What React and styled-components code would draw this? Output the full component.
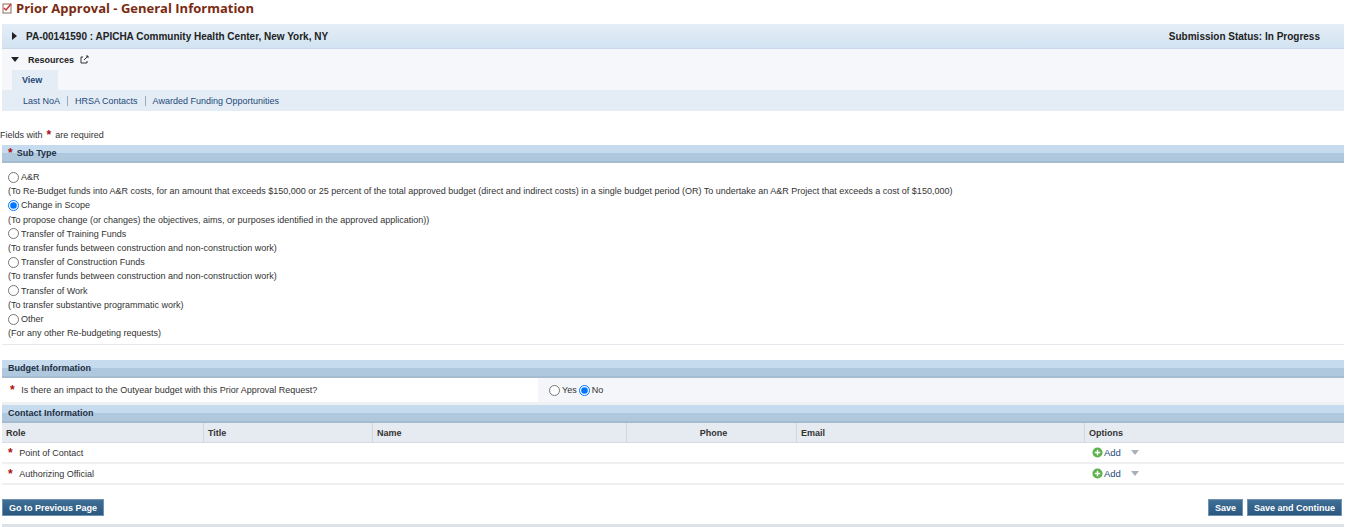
import React from "react";
import styled, { createGlobalStyle } from "styled-components";

const G = createGlobalStyle`
  body { margin: 0; font-family: "Liberation Sans", Arial, sans-serif; font-size: 9px; color: #222; background: #fff; }
  * { box-sizing: border-box; }
`;
const Page = styled.div` width: 1344px; `;
const Title = styled.h1`
  margin: 0; padding: 0 0 0 2px; height: 24px; display: flex; align-items: center; gap: 3px; padding-bottom: 8px;
  font-size: 13px; font-weight: bold; color: #7b2a12; font-family: "Open Sans", "Liberation Sans", sans-serif;
`;
const Bar = styled.div`
  margin-left: 2px; height: 25px; display: flex; align-items: center; justify-content: space-between;
  padding: 0 24px 0 10px; background: linear-gradient(#e4eef7, #d3e3f1); border-bottom: 1px solid #c8d8e8;
  font-weight: bold; font-size: 10px; color: #222;
`;
const Tri = styled.span`display:inline-block; width:0; height:0; margin-right:9px;
  ${p => p.down ? "border-left:4px solid transparent;border-right:4px solid transparent;border-top:5px solid #222;" : "border-top:4px solid transparent;border-bottom:4px solid transparent;border-left:5px solid #222;"}`;
const Res = styled.div` margin-left: 2px; background: #f5f7fa; `;
const ResHead = styled.div` height: 21px; display: flex; align-items: center; padding-left: 9px; font-weight: bold; font-size: 9px; `;
const Tab = styled.div` margin-left: 10px; width: 46px; height: 20px; background: #e4ecf5; display:flex; align-items:center; padding-left: 10px; font-weight: bold; font-size: 9px; color:#1d4a7a;`;
const Links = styled.div` height: 21px; background: #e4ecf5; display:flex; align-items:center; padding-left: 21px; font-size: 9px; color: #1d4a7a;
  span + span { border-left: 1px solid #9ab; margin-left: 7px; padding-left: 7px; }`;
const Req = styled.div` margin-top: 14px; height: 20px; display:flex; align-items:center; font-size: 9px; color:#333;`;
const Star = styled.span` color: #a11; font-weight: bold; font-size: 12px; margin: 0 4px 0 ${p=>p.ml||0}px; line-height: 1;`;
const SecHead = styled.div`
  margin-left: 2px; height: 18px; display:flex; align-items:center; padding-left: 6px; margin-top: ${p=>p.mt||0}px;
  background: linear-gradient(#c7dbee 0, #c7dbee 50%, #b0c8dd 50%); border-bottom: 2px solid #a4bbd0;
  font-weight: bold; font-size: 9px; color: #1e2f44;
`;
const Opts = styled.div` margin-left: 2px; padding: 7px 0 4px 6px; border-bottom: 1px solid #e5e8ec; font-size: 9px; color:#333; line-height: 14.2px; `;
const Opt = styled.label` display:flex; align-items:center; gap: 2px; input { margin: 0; width: 11px; height: 11px; }`;
const QRow = styled.div` margin-left: 2px; height: 27px; display:flex; align-items:center; font-size: 9px; color:#333; border-bottom: 3px solid #eef0f2;`;
const QL = styled.div` width: 536px; padding-left: 6px; background:#fff; height: 100%; display:flex; align-items:center;`;
const QR = styled.div` flex: 1; background: #f4f6f9; height: 100%; display:flex; align-items:center; padding-left: 11px; gap: 2px; input{margin:0;width:11px;height:11px;}`;
const Table = styled.div` margin-left: 2px; `;
const Row = styled.div` display: grid; grid-template-columns: 202px 169px 254px 170px 288px 1fr; height: ${p=>p.h||20}px; align-items:center;
  ${p => p.head ? "background:#e6eaf1; font-weight:bold; border-bottom:1px solid #d5dbe3;" : "border-bottom:2px solid #eef0f2; background:#fff;"} font-size: 9px; color: #333;`;
const Cell = styled.div` padding-left: ${p=>p.pl ?? 4}px; height:100%; display:flex; align-items:center; justify-content:${p=>p.c?"center":"flex-start"}; ${p=>p.head?"border-right:1px solid #cfd6df;":""}`;
const AddL = styled.span` display:flex; align-items:center; gap: 1px; color: #1d4a7a; font-size: 9.5px;`;
const Footer = styled.div` margin-left: 2px; margin-top: 14px; display:flex; justify-content: space-between; padding-bottom: 8px; border-bottom: 3px solid #dde2e8;`;
const Btn = styled.button` height: 17px; background: linear-gradient(#3f6f96, #2b587e); color: #fff; border: 1px solid #6f93b2; font-weight:bold; font-size: 9px; padding: 0 6px; font-family: inherit;`;
const BtnG = styled.div` display:flex; gap: 4px; margin-right: 2px;`;

const Plus = () => (<svg width="11" height="11" viewBox="0 0 12 12"><circle cx="6" cy="6" r="5.5" fill="#5bb24a"/><path d="M6 3v6M3 6h6" stroke="#fff" strokeWidth="1.6"/></svg>);
const Caret = () => (<svg width="8" height="5" style={{marginLeft:9}} viewBox="0 0 8 5"><path d="M0 0h8L4 5z" fill="#a8b0b8"/></svg>);

const opts = [
  ["A&R", "(To Re-Budget funds into A&R costs, for an amount that exceeds $150,000 or 25 percent of the total approved budget (direct and indirect costs) in a single budget period (OR) To undertake an A&R Project that exceeds a cost of $150,000)"],
  ["Change in Scope", "(To propose change (or changes) the objectives, aims, or purposes identified in the approved application))"],
  ["Transfer of Training Funds", "(To transfer funds between construction and non-construction work)"],
  ["Transfer of Construction Funds", "(To transfer funds between construction and non-construction work)"],
  ["Transfer of Work", "(To transfer substantive programmatic work)"],
  ["Other", "(For any other Re-budgeting requests)"],
];

export default function App() {
  return (<Page><G/>
    <Title><svg width="11" height="12" viewBox="0 0 11 12"><rect x="1" y="2" width="8" height="9" fill="#fff" stroke="#8a6a5a"/><path d="M2 6l2 2 5-6" stroke="#c33" strokeWidth="1.5" fill="none"/></svg>Prior Approval - General Information</Title>
    <Bar><span><Tri/>PA-00141590 : APICHA Community Health Center, New York, NY</span><span>Submission Status: In Progress</span></Bar>
    <Res>
      <ResHead><Tri down/>Resources<svg width="9" height="9" style={{marginLeft:6}} viewBox="0 0 9 9"><path d="M6 1h2v2M8 1L4 5M3 2H1v6h6V6" stroke="#333" fill="none"/></svg></ResHead>
      <Tab>View</Tab>
      <Links><span>Last NoA</span><span>HRSA Contacts</span><span>Awarded Funding Opportunities</span></Links>
    </Res>
    <Req>Fields with <Star ml={4}>*</Star> are required</Req>
    <SecHead><Star>*</Star>Sub Type</SecHead>
    <Opts>{opts.map(([a,b],i)=>(<div key={a}><Opt><input type="radio" name="st" defaultChecked={i===1}/>{a}</Opt><div>{b}</div></div>))}</Opts>
    <SecHead mt={15}>Budget Information</SecHead>
    <QRow><QL><Star ml={2}>*</Star>&nbsp;Is there an impact to the Outyear budget with this Prior Approval Request?</QL>
      <QR><input type="radio" name="b"/>Yes <input type="radio" name="b" defaultChecked/>No</QR></QRow>
    <SecHead>Contact Information</SecHead>
    <Table>
      <Row head><Cell head>Role</Cell><Cell head>Title</Cell><Cell head>Name</Cell><Cell head c>Phone</Cell><Cell head>Email</Cell><Cell>Options</Cell></Row>
      {["Point of Contact","Authorizing Official"].map(r=>(<Row key={r} h={21}><Cell><Star ml={2}>*</Star>&nbsp;{r}</Cell><Cell/><Cell/><Cell/><Cell/><Cell pl={7}><AddL><Plus/>Add<Caret/></AddL></Cell></Row>))}
    </Table>
    <Footer><Btn>Go to Previous Page</Btn><BtnG><Btn>Save</Btn><Btn>Save and Continue</Btn></BtnG></Footer>
  </Page>);
}
